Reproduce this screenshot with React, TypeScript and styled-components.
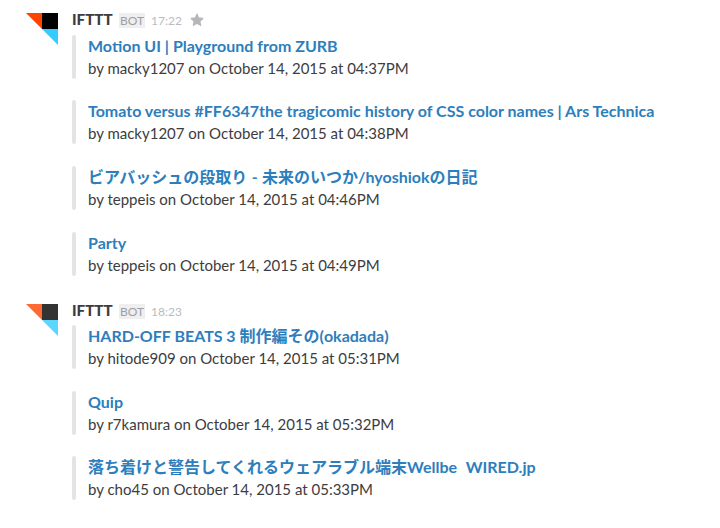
import React from "react";
import styled, { createGlobalStyle } from "styled-components";

const GlobalStyle = createGlobalStyle`
  body { margin: 0; background: #fff; font-family: Lato, "Noto Sans CJK JP", sans-serif; color: #3d3c40; }
`;

const Page = styled.main`
  height: 528px;
  padding: 11px 0 0 26px;
  box-sizing: border-box;
  overflow: hidden;
`;

const Message = styled.article<{ $height: number }>`
  display: grid;
  grid-template-columns: 32px 1fr;
  column-gap: 14px;
  height: ${(p) => p.$height}px;
`;

const Avatar = styled.svg`
  width: 32px;
  height: 32px;
  margin-top: 2px;
`;

const Header = styled.header<{ $gap: number }>`
  display: flex;
  align-items: center;
  height: 18px;
  margin-bottom: ${(p) => p.$gap}px;
`;

const Name = styled.span`
  width: 47px;
  font-size: 15.2px;
  font-weight: 900;
  line-height: 18px;
  margin-top: -2px;
`;

const Bot = styled.span`
  box-sizing: border-box;
  width: 26px;
  height: 15px;
  text-align: center;
  font-size: 12px;
  line-height: 16px;
  color: #9e9ea6;
  background: #efefef;
`;

const Time = styled.time`
  margin-left: 6px;
  font-size: 12px;
  color: #babbbf;
`;

const Star = styled.svg`
  width: 14px;
  height: 14px;
  margin: 0 0 0 8px;
`;

const Attachment = styled.section<{ $gap: number }>`
  display: grid;
  grid-template-columns: 4px 1fr;
  column-gap: 12px;
  height: 44px;
  margin-bottom: ${(p) => p.$gap}px;
  white-space: pre;
`;

const Bar = styled.span`
  border-radius: 2px;
  background: #e3e4e6;
`;

const Title = styled.div<{ $wordSpacing: number }>`
  font-size: 16px;
  font-weight: 700;
  line-height: 22px;
  word-spacing: ${(p) => p.$wordSpacing}px;
  color: #2d7ebc;
`;

const Byline = styled.div`
  font-size: 15px;
  line-height: 22px;
`;

type Item = { title: string; by: string; gap: number; wordSpacing?: number };
type Post = {
  time: string;
  starred: boolean;
  height: number;
  headerGap: number;
  dark: string;
  red: string;
  blue: string;
  items: Item[];
};

const posts: Post[] = [
  {
    time: "17:22", starred: true, height: 291, headerGap: 6, dark: "#000", red: "#ff4400", blue: "#33ccff",
    items: [
      { title: "Motion UI | Playground from ZURB", by: "by macky1207 on October 14, 2015 at 04:37PM", gap: 21 },
      { title: "Tomato versus #FF6347the tragicomic history of CSS color names | Ars Technica", by: "by macky1207 on October 14, 2015 at 04:38PM", gap: 22 },
      { title: "ビアバッシュの段取り - 未来のいつか/hyoshiokの日記", by: "by teppeis on October 14, 2015 at 04:46PM", gap: 22, wordSpacing: 0.5 },
      { title: "Party", by: "by teppeis on October 14, 2015 at 04:49PM", gap: 0 },
    ],
  },
  {
    time: "18:23", starred: false, height: 220, headerGap: 5, dark: "#333", red: "#ff6933", blue: "#5cd6ff",
    items: [
      { title: "HARD-OFF BEATS 3 制作編その(okadada)", by: "by hitode909 on October 14, 2015 at 05:31PM", gap: 22 },
      { title: "Quip", by: "by r7kamura on October 14, 2015 at 05:32PM", gap: 21 },
      { title: "落ち着けと警告してくれるウェアラブル端末Wellbe  WIRED.jp", by: "by cho45 on October 14, 2015 at 05:33PM", gap: 0, wordSpacing: 0.5 },
    ],
  },
];

export default function App() {
  return (
    <>
      <GlobalStyle />
      <Page>
        {posts.map((post) => (
          <Message key={post.time} $height={post.height}>
            <Avatar viewBox="0 0 32 32">
              <path d="M0 0H16V16Z" fill={post.red} />
              <path d="M16 0H32V16H16Z" fill={post.dark} />
              <path d="M16 16H32V32Z" fill={post.blue} />
            </Avatar>
            <div>
              <Header $gap={post.headerGap}>
                <Name>IFTTT</Name>
                <Bot>BOT</Bot>
                <Time>{post.time}</Time>
                {post.starred && (
                  <Star viewBox="0 0 14 14">
                    <path d="M7 1.2 8.6 4.9 12.8 5.4 9.8 8.2 10.6 12.3 7 10.3 3.4 12.3 4.2 8.2 1.2 5.4 5.4 4.9Z" fill="#b5b6ba" stroke="#b5b6ba" strokeWidth="1.3" strokeLinejoin="round" />
                  </Star>
                )}
              </Header>
              {post.items.map((item) => (
                <Attachment key={item.by} $gap={item.gap}>
                  <Bar />
                  <div>
                    <Title $wordSpacing={item.wordSpacing ?? 0}>{item.title}</Title>
                    <Byline>{item.by}</Byline>
                  </div>
                </Attachment>
              ))}
            </div>
          </Message>
        ))}
      </Page>
    </>
  );
}
